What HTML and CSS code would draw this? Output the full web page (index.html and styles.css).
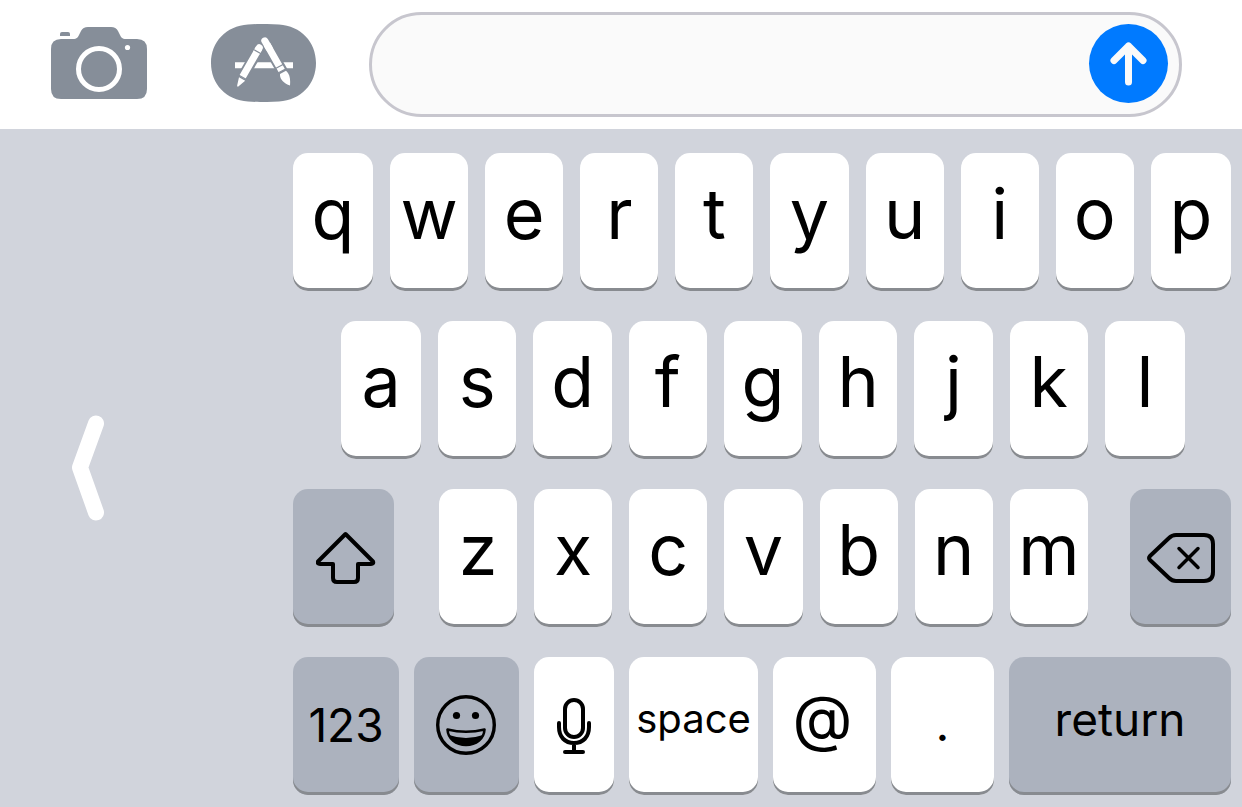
FILE: index.html
```html
<!DOCTYPE html>
<html lang="en">
<head>
<meta charset="utf-8">
<meta name="viewport" content="width=device-width, initial-scale=1">
<title>Messages keyboard</title>
<link rel="stylesheet" href="styles.css">
</head>
<body>
<main class="screen">
  <form class="toolbar">
    <button class="tool tool-camera" type="button" aria-label="Camera">
      <svg width="96" height="72" viewBox="0 0 96 72" aria-hidden="true">
        <path fill="#868e99" d="M9 9V7q0-2 2-2h6q2 0 2 2v2z"/>
        <path fill="#868e99" d="M10 12H22C26 12 27 10 28 8L30 4Q32 0 37 0H60Q65 0 67 4L69 8C70 10 71 12 75 12H86Q96 12 96 22V62Q96 72 86 72H10Q0 72 0 62V22Q0 12 10 12Z"/>
        <circle cx="48" cy="42" r="20.500" fill="none" stroke="#fff" stroke-width="5"/>
        <circle cx="76.500" cy="20.500" r="2.600" fill="#fff"/>
      </svg>
    </button>
    <button class="tool tool-apps" type="button" aria-label="Apps">
      <svg width="105" height="78" viewBox="0 0 105 78" aria-hidden="true">
        <path fill="#868e99" d="M37 0.500C47 -0.200 58 -0.200 68 0.500C90 2 105 18 105 39S90 76 68 77.500C58 78.200 47 78.200 37 77.500C15 76 0 60 0 39S15 2 37 0.500Z"/>
        <path fill="#fff" d="M24 38.300H82V44.300H24Z"/>
        <path stroke="#868e99" stroke-width="11" d="M48.500 24L31 54M54 17L72 48.500"/>
        <path stroke="#fff" stroke-width="7" stroke-linecap="round" d="M48.300 23.700L46 27.700M53.800 16.800L58 24"/>
        <path stroke="#fff" stroke-width="7" d="M48 24.200L31.200 53.400M56 20.600L71 47"/>
        <path stroke="#868e99" stroke-width="1.200" d="M42.500 25.500L50.500 30M27.500 51L35.500 55.600M64.500 44.500L73 40M67 49L75.500 44.500"/>
        <path fill="#fff" d="M28 53.200L34.200 56.700L27 62.700Q26 62.500 26.200 61.300ZM69 50L75 46.700C79 50 79.500 55 79 61.500C73 59.500 68.500 55 69 50Z"/>
      </svg>
    </button>
    <div class="composer">
      <input class="composer-input" type="text" aria-label="Message">
      <button class="send" type="button" aria-label="Send">
        <svg width="79" height="79" viewBox="0 0 79 79" aria-hidden="true">
          <path fill="none" stroke="#fafafa" stroke-width="7" stroke-linecap="round" stroke-linejoin="round" d="M39.500 22V58M25 36.500L39.500 22L54 36.500"/>
        </svg>
      </button>
    </div>
  </form>

  <section class="keyboard" aria-label="Keyboard">
    <button class="expand" type="button" aria-label="Full width keyboard">
      <svg width="34" height="106" viewBox="0 0 34 106" aria-hidden="true">
        <path fill="none" stroke="#fff" stroke-width="16" stroke-linecap="round" stroke-linejoin="round" d="M25 8.500L9 52.500L25 97.500"/>
      </svg>
    </button>
    <div class="rows">
      <div class="row row-top">
        <button class="key edge" type="button">q</button>
        <button class="key" type="button">w</button>
        <button class="key" type="button">e</button>
        <button class="key" type="button">r</button>
        <button class="key" type="button">t</button>
        <button class="key" type="button">y</button>
        <button class="key" type="button">u</button>
        <button class="key" type="button">i</button>
        <button class="key" type="button">o</button>
        <button class="key edge" type="button">p</button>
      </div>
      <div class="row row-home">
        <button class="key edge" type="button">a</button>
        <button class="key" type="button">s</button>
        <button class="key" type="button">d</button>
        <button class="key" type="button">f</button>
        <button class="key" type="button">g</button>
        <button class="key" type="button">h</button>
        <button class="key" type="button">j</button>
        <button class="key" type="button">k</button>
        <button class="key edge" type="button">l</button>
      </div>
      <div class="row row-lower">
        <button class="key dark shift" type="button" aria-label="Shift">
          <svg width="60" height="54" viewBox="0 0 60 54" aria-hidden="true">
            <path fill="none" stroke="#000" stroke-width="4" stroke-linejoin="round" d="M29.500 3L57 30.500Q58 33 55 33H42V47Q42 51 38 51H21Q17 51 17 47V33H4Q1 33 2 30.500Z"/>
          </svg>
        </button>
        <div class="row letters">
          <button class="key" type="button">z</button>
          <button class="key" type="button">x</button>
          <button class="key" type="button">c</button>
          <button class="key" type="button">v</button>
          <button class="key" type="button">b</button>
          <button class="key" type="button">n</button>
          <button class="key" type="button">m</button>
        </div>
        <button class="key dark" type="button" aria-label="Delete">
          <svg width="68" height="52" viewBox="0 0 68 52" aria-hidden="true">
            <path fill="none" stroke="#000" stroke-width="4" stroke-linejoin="round" d="M3 24Q1 26 3 28L22 46Q25 49 29 49H57Q66 49 66 40V12Q66 3 57 3H29Q25 3 22 6Z"/>
            <path stroke="#000" stroke-width="3.500" stroke-linecap="round" d="M32 16.500L51 35.500M51 16.500L32 35.500"/>
          </svg>
        </button>
      </div>
      <div class="row-bottom">
        <button class="key dark numbers" type="button">123</button>
        <button class="key dark emoji" type="button" aria-label="Emoji">
          <svg width="60" height="60" viewBox="0 0 60 60" aria-hidden="true">
            <circle cx="30" cy="30" r="28.300" fill="none" stroke="#000" stroke-width="3.400"/>
            <circle cx="20.500" cy="20.500" r="3.600"/>
            <circle cx="39.500" cy="20.500" r="3.600"/>
            <path fill="none" stroke="#000" stroke-width="2.600" stroke-linejoin="round" d="M11.500 34.500Q30 39 48.500 34.500C48 44 40 50 30 50S12 44 11.500 34.500Z"/>
            <path d="M13 40Q30 46 47 40C44 47 38 50.500 30 50.500S16 47 13 40Z"/>
          </svg>
        </button>
        <button class="key" type="button" aria-label="Dictation">
          <svg width="36" height="58" viewBox="0 0 36 58" aria-hidden="true">
            <g fill="none" stroke="#000" stroke-width="4" stroke-linecap="round">
              <rect x="9" y="3" width="18" height="37" rx="9"/>
              <path d="M3 26V30C3 40 9 46 18 46S33 40 33 30V26M18 46V55M9 55H27"/>
            </g>
          </svg>
        </button>
        <button class="key space" type="button">space</button>
        <button class="key at" type="button">@</button>
        <button class="key dot" type="button">.</button>
        <button class="key dark return" type="button">return</button>
      </div>
    </div>
  </section>
</main>
</body>
</html>
```
FILE: styles.css
```css
* {
  box-sizing: border-box;
}

body {
  margin: 0;
  background: #d1d4dc;
  color: #000;
  font-family: Inter, "Liberation Sans", sans-serif;
}

button {
  margin: 0;
  padding: 0;
  border: 0;
  background: none;
  color: inherit;
  font: inherit;
}

svg {
  display: block;
}

.screen {
  display: flex;
  flex-direction: column;
  min-height: 100vh;
}

.toolbar {
  display: flex;
  align-items: center;
  padding: 12px 60px 12px 51px;
  background: #fff;
}

.tool {
  flex: none;
  padding-bottom: 3px;
}

.tool-camera {
  margin-right: 64px;
}

.tool-apps {
  margin-right: 53px;
}

.composer {
  display: flex;
  flex: 1;
  align-items: center;
  min-width: 0;
  height: 105px;
  padding: 0 11px 2px 36px;
  border: 3px solid #c7c6ce;
  border-radius: 53px;
  background: #fafafa;
}

.composer-input {
  flex: 1;
  min-width: 0;
  height: 80px;
  padding: 0;
  border: 0;
  outline: 0;
  background: transparent;
  font: 48px Inter, sans-serif;
}

.send {
  flex: none;
  border-radius: 50%;
  background: #007aff;
}

.keyboard {
  display: flex;
  flex: 1;
  padding: 24px 11px 12px 0;
}

.expand {
  display: flex;
  flex: 0 0 293px;
  align-items: center;
  padding: 0 0 12px 71px;
}

.rows {
  display: flex;
  flex: 1;
  flex-direction: column;
  gap: 30px;
  min-width: 0;
}

.row {
  display: flex;
  gap: 17px;
}

.row-home {
  padding: 0 46px 0 48px;
}

.row-lower {
  display: grid;
  grid-template-columns: 101fr 652fr 101fr;
  gap: 0 42px;
}

.letters {
  margin-left: 3px;
}

.row-bottom {
  display: grid;
  grid-template-columns: 106fr 105fr 80fr 129fr 103fr 103fr 222fr;
  gap: 0 15px;
}

.key {
  display: flex;
  flex: 78 1 0;
  align-items: center;
  justify-content: center;
  min-width: 0;
  height: 138px;
  padding-bottom: 16px;
  border-radius: 15px;
  background: #fff;
  box-shadow: inset 0 -3px #888b90;
  font-size: 70px;
  font-weight: 400;
  line-height: 1;
}

.edge {
  flex-grow: 80;
}

.key:has(svg) {
  padding-bottom: 0;
}

.shift {
  padding-left: 5px;
}

.key.emoji {
  padding: 0 2px 2px 0;
}

.dark {
  background: #acb2be;
}

.numbers,
.return {
  font-size: 46px;
}

.numbers {
  padding-bottom: 3px;
}

.return {
  padding-bottom: 14px;
}

.space {
  font-size: 40px;
  padding-bottom: 14px;
}

.at {
  padding: 0 4px 16px 0;
  font-size: 62px;
}

.dot {
  padding-bottom: 4px;
  font-size: 48px;
}
```
